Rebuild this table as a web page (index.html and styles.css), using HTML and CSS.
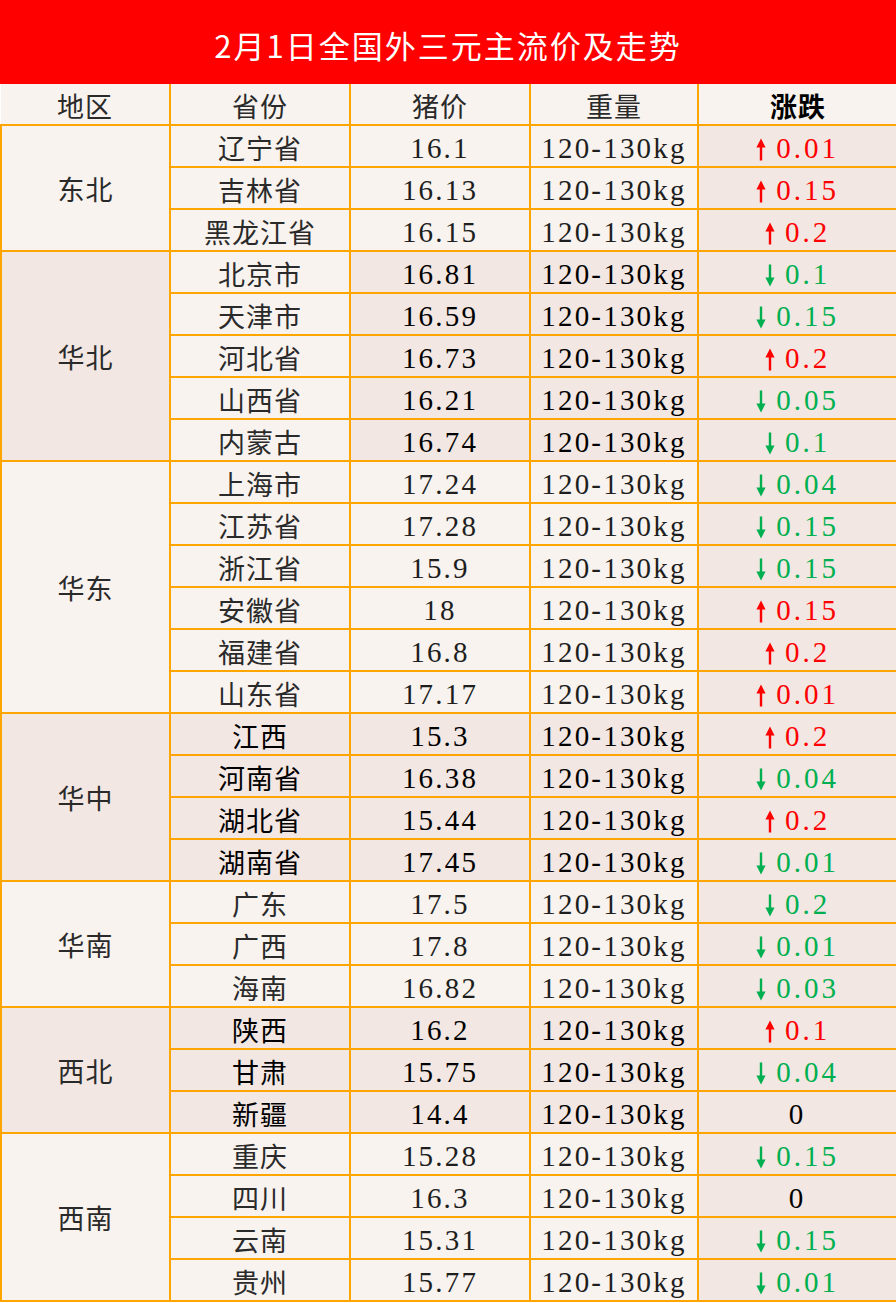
FILE: index.html
```html
<!DOCTYPE html>
<html lang="zh-CN">
<head>
<meta charset="utf-8">
<title>2月1日全国外三元主流价及走势</title>
<link rel="stylesheet" href="styles.css">
</head>
<body>
<div class="page">
  <div class="title">2月1日全国外三元主流价及走势</div>
  <table class="grid">
    <colgroup>
      <col class="c1"><col class="c2"><col class="c3"><col class="c4"><col class="c5">
    </colgroup>
    <thead>
      <tr>
        <th class="h-first">地区</th>
        <th>省份</th>
        <th>猪价</th>
        <th>重量</th>
        <th class="h-last">涨跌</th>
      </tr>
    </thead>
    <tbody>
      <tr class="g-light"><td class="rg" rowspan="3">东北</td><td class="pv">辽宁省</td><td class="num">16.1</td><td class="wt">120-130kg</td><td class="chg up"><svg class="ar" viewBox="0 0 10 22"><path d="M5 0 L9.6 9 L6.2 9 L6.2 22 L3.8 22 L3.8 9 L0.4 9 Z"/></svg>0.01</td></tr>
      <tr class="g-light"><td class="pv">吉林省</td><td class="num">16.13</td><td class="wt">120-130kg</td><td class="chg up"><svg class="ar" viewBox="0 0 10 22"><path d="M5 0 L9.6 9 L6.2 9 L6.2 22 L3.8 22 L3.8 9 L0.4 9 Z"/></svg>0.15</td></tr>
      <tr class="g-light"><td class="pv">黑龙江省</td><td class="num">16.15</td><td class="wt">120-130kg</td><td class="chg up"><svg class="ar" viewBox="0 0 10 22"><path d="M5 0 L9.6 9 L6.2 9 L6.2 22 L3.8 22 L3.8 9 L0.4 9 Z"/></svg>0.2</td></tr>

      <tr class="g-mid"><td class="rg" rowspan="5">华北</td><td class="pv">北京市</td><td class="num">16.81</td><td class="wt">120-130kg</td><td class="chg dn"><svg class="ar" viewBox="0 0 10 22"><path d="M5 22 L9.6 13 L6.2 13 L6.2 0 L3.8 0 L3.8 13 L0.4 13 Z"/></svg>0.1</td></tr>
      <tr class="g-mid"><td class="pv">天津市</td><td class="num">16.59</td><td class="wt">120-130kg</td><td class="chg dn"><svg class="ar" viewBox="0 0 10 22"><path d="M5 22 L9.6 13 L6.2 13 L6.2 0 L3.8 0 L3.8 13 L0.4 13 Z"/></svg>0.15</td></tr>
      <tr class="g-mid"><td class="pv">河北省</td><td class="num">16.73</td><td class="wt">120-130kg</td><td class="chg up"><svg class="ar" viewBox="0 0 10 22"><path d="M5 0 L9.6 9 L6.2 9 L6.2 22 L3.8 22 L3.8 9 L0.4 9 Z"/></svg>0.2</td></tr>
      <tr class="g-mid"><td class="pv">山西省</td><td class="num">16.21</td><td class="wt">120-130kg</td><td class="chg dn"><svg class="ar" viewBox="0 0 10 22"><path d="M5 22 L9.6 13 L6.2 13 L6.2 0 L3.8 0 L3.8 13 L0.4 13 Z"/></svg>0.05</td></tr>
      <tr class="g-mid"><td class="pv">内蒙古</td><td class="num">16.74</td><td class="wt">120-130kg</td><td class="chg dn"><svg class="ar" viewBox="0 0 10 22"><path d="M5 22 L9.6 13 L6.2 13 L6.2 0 L3.8 0 L3.8 13 L0.4 13 Z"/></svg>0.1</td></tr>

      <tr class="g-light"><td class="rg" rowspan="6">华东</td><td class="pv">上海市</td><td class="num">17.24</td><td class="wt">120-130kg</td><td class="chg dn"><svg class="ar" viewBox="0 0 10 22"><path d="M5 22 L9.6 13 L6.2 13 L6.2 0 L3.8 0 L3.8 13 L0.4 13 Z"/></svg>0.04</td></tr>
      <tr class="g-light"><td class="pv">江苏省</td><td class="num">17.28</td><td class="wt">120-130kg</td><td class="chg dn"><svg class="ar" viewBox="0 0 10 22"><path d="M5 22 L9.6 13 L6.2 13 L6.2 0 L3.8 0 L3.8 13 L0.4 13 Z"/></svg>0.15</td></tr>
      <tr class="g-light"><td class="pv">浙江省</td><td class="num">15.9</td><td class="wt">120-130kg</td><td class="chg dn"><svg class="ar" viewBox="0 0 10 22"><path d="M5 22 L9.6 13 L6.2 13 L6.2 0 L3.8 0 L3.8 13 L0.4 13 Z"/></svg>0.15</td></tr>
      <tr class="g-light"><td class="pv">安徽省</td><td class="num">18</td><td class="wt">120-130kg</td><td class="chg up"><svg class="ar" viewBox="0 0 10 22"><path d="M5 0 L9.6 9 L6.2 9 L6.2 22 L3.8 22 L3.8 9 L0.4 9 Z"/></svg>0.15</td></tr>
      <tr class="g-light"><td class="pv">福建省</td><td class="num">16.8</td><td class="wt">120-130kg</td><td class="chg up"><svg class="ar" viewBox="0 0 10 22"><path d="M5 0 L9.6 9 L6.2 9 L6.2 22 L3.8 22 L3.8 9 L0.4 9 Z"/></svg>0.2</td></tr>
      <tr class="g-light"><td class="pv">山东省</td><td class="num">17.17</td><td class="wt">120-130kg</td><td class="chg up"><svg class="ar" viewBox="0 0 10 22"><path d="M5 0 L9.6 9 L6.2 9 L6.2 22 L3.8 22 L3.8 9 L0.4 9 Z"/></svg>0.01</td></tr>

      <tr class="g-dark"><td class="rg" rowspan="4">华中</td><td class="pv">江西</td><td class="num">15.3</td><td class="wt">120-130kg</td><td class="chg up"><svg class="ar" viewBox="0 0 10 22"><path d="M5 0 L9.6 9 L6.2 9 L6.2 22 L3.8 22 L3.8 9 L0.4 9 Z"/></svg>0.2</td></tr>
      <tr class="g-dark"><td class="pv">河南省</td><td class="num">16.38</td><td class="wt">120-130kg</td><td class="chg dn"><svg class="ar" viewBox="0 0 10 22"><path d="M5 22 L9.6 13 L6.2 13 L6.2 0 L3.8 0 L3.8 13 L0.4 13 Z"/></svg>0.04</td></tr>
      <tr class="g-dark"><td class="pv">湖北省</td><td class="num">15.44</td><td class="wt">120-130kg</td><td class="chg up"><svg class="ar" viewBox="0 0 10 22"><path d="M5 0 L9.6 9 L6.2 9 L6.2 22 L3.8 22 L3.8 9 L0.4 9 Z"/></svg>0.2</td></tr>
      <tr class="g-dark"><td class="pv">湖南省</td><td class="num">17.45</td><td class="wt">120-130kg</td><td class="chg dn"><svg class="ar" viewBox="0 0 10 22"><path d="M5 22 L9.6 13 L6.2 13 L6.2 0 L3.8 0 L3.8 13 L0.4 13 Z"/></svg>0.01</td></tr>

      <tr class="g-light"><td class="rg" rowspan="3">华南</td><td class="pv">广东</td><td class="num">17.5</td><td class="wt">120-130kg</td><td class="chg dn"><svg class="ar" viewBox="0 0 10 22"><path d="M5 22 L9.6 13 L6.2 13 L6.2 0 L3.8 0 L3.8 13 L0.4 13 Z"/></svg>0.2</td></tr>
      <tr class="g-light"><td class="pv">广西</td><td class="num">17.8</td><td class="wt">120-130kg</td><td class="chg dn"><svg class="ar" viewBox="0 0 10 22"><path d="M5 22 L9.6 13 L6.2 13 L6.2 0 L3.8 0 L3.8 13 L0.4 13 Z"/></svg>0.01</td></tr>
      <tr class="g-light"><td class="pv">海南</td><td class="num">16.82</td><td class="wt">120-130kg</td><td class="chg dn"><svg class="ar" viewBox="0 0 10 22"><path d="M5 22 L9.6 13 L6.2 13 L6.2 0 L3.8 0 L3.8 13 L0.4 13 Z"/></svg>0.03</td></tr>

      <tr class="g-dark"><td class="rg" rowspan="3">西北</td><td class="pv">陕西</td><td class="num">16.2</td><td class="wt">120-130kg</td><td class="chg up"><svg class="ar" viewBox="0 0 10 22"><path d="M5 0 L9.6 9 L6.2 9 L6.2 22 L3.8 22 L3.8 9 L0.4 9 Z"/></svg>0.1</td></tr>
      <tr class="g-dark"><td class="pv">甘肃</td><td class="num">15.75</td><td class="wt">120-130kg</td><td class="chg dn"><svg class="ar" viewBox="0 0 10 22"><path d="M5 22 L9.6 13 L6.2 13 L6.2 0 L3.8 0 L3.8 13 L0.4 13 Z"/></svg>0.04</td></tr>
      <tr class="g-dark"><td class="pv">新疆</td><td class="num">14.4</td><td class="wt">120-130kg</td><td class="chg zero">0</td></tr>

      <tr class="g-light"><td class="rg" rowspan="4">西南</td><td class="pv">重庆</td><td class="num">15.28</td><td class="wt">120-130kg</td><td class="chg dn"><svg class="ar" viewBox="0 0 10 22"><path d="M5 22 L9.6 13 L6.2 13 L6.2 0 L3.8 0 L3.8 13 L0.4 13 Z"/></svg>0.15</td></tr>
      <tr class="g-light"><td class="pv">四川</td><td class="num">16.3</td><td class="wt">120-130kg</td><td class="chg zero">0</td></tr>
      <tr class="g-light"><td class="pv">云南</td><td class="num">15.31</td><td class="wt">120-130kg</td><td class="chg dn"><svg class="ar" viewBox="0 0 10 22"><path d="M5 22 L9.6 13 L6.2 13 L6.2 0 L3.8 0 L3.8 13 L0.4 13 Z"/></svg>0.15</td></tr>
      <tr class="g-light"><td class="pv">贵州</td><td class="num">15.77</td><td class="wt">120-130kg</td><td class="chg dn"><svg class="ar" viewBox="0 0 10 22"><path d="M5 22 L9.6 13 L6.2 13 L6.2 0 L3.8 0 L3.8 13 L0.4 13 Z"/></svg>0.01</td></tr>
    </tbody>
  </table>
</div>
</body>
</html>
```

FILE: styles.css
```css
html, body {
  margin: 0;
  padding: 0;
  background: #ffffff;
}

.page {
  width: 896px;
  font-family: "Liberation Serif", "Noto Sans CJK SC", serif;
}

.title {
  height: 84px;
  background: #ff0000;
  color: #ffffff;
  font-family: "Noto Sans CJK SC", sans-serif;
  font-size: 31px;
  letter-spacing: 2px;
  display: flex;
  align-items: center;
  justify-content: center;
  padding-top: 4px;
  box-sizing: border-box;
}

.grid {
  width: 896px;
  border-collapse: collapse;
  table-layout: fixed;
}

.c1 { width: 169px; }
.c2 { width: 180px; }
.c3 { width: 180px; }
.c4 { width: 168px; }
.c5 { width: 199px; }

.grid th,
.grid td {
  border: 2px solid #ffa500;
  height: 36px;
  line-height: 36px;
  padding: 4px 0 0 0;
  text-align: center;
  vertical-align: middle;
  background: #f8f3ef;
  color: #2a2a2a;
  white-space: nowrap;
  overflow: hidden;
}

.grid th {
  font-family: "Noto Sans CJK SC", sans-serif;
  font-weight: normal;
  font-size: 27px;
  letter-spacing: 1px;
  color: #2a2a2a;
  border-top: none;
}

.grid th.h-first {
  border-left: none;
}

.grid th.h-last {
  border-right: none;
  color: #000000;
  font-weight: bold;
}

.rg {
  font-family: "Noto Sans CJK SC", sans-serif;
  font-size: 27px;
  letter-spacing: 1px;
}

.grid td.rg {
  padding-top: 2px;
}

.pv {
  font-family: "Noto Sans CJK SC", sans-serif;
  font-size: 27px;
  letter-spacing: 1px;
}

.num,
.wt,
.chg {
  font-size: 29px;
  letter-spacing: 2.2px;
}

.grid td.num,
.grid td.wt {
  color: #1e1e1e;
}

.chg {
  background: #f2e7e2 !important;
  letter-spacing: 3px;
}

.grid td.chg.up { color: #ff0000; }
.grid td.chg.dn { color: #00b050; }
.grid td.chg.zero { color: #000000; }

.ar {
  width: 10px;
  height: 23px;
  margin-right: 10px;
  vertical-align: -3px;
  fill: currentColor;
}

.g-mid .rg,
.g-dark .rg {
  background: #f2e7e2;
}

.grid .g-mid td.num,
.grid .g-mid td.wt {
  background: #f2e7e2;
  color: #000000;
}

.grid .g-dark td.pv,
.grid .g-dark td.num,
.grid .g-dark td.wt {
  background: #f2e7e2;
  color: #000000;
}
```
